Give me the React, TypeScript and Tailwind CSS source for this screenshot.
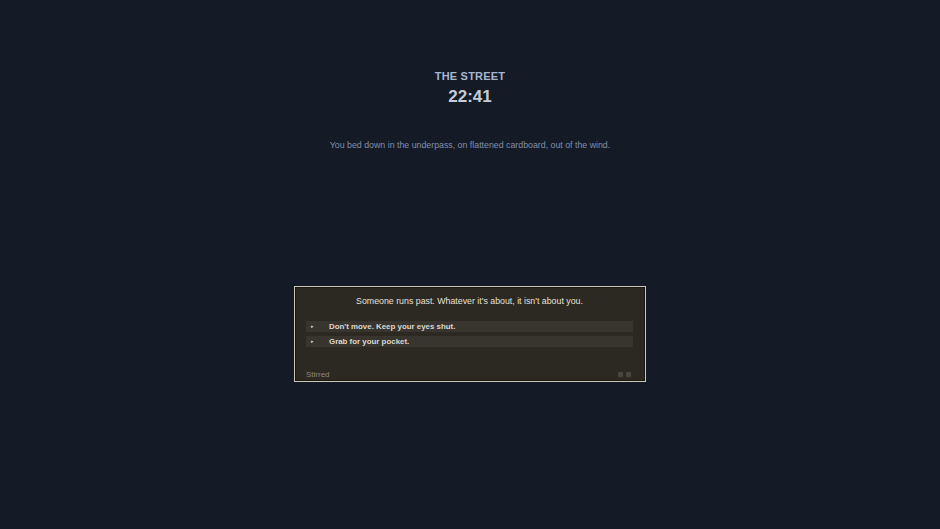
export default function App() {
  const choices = ["Don't move. Keep your eyes shut.", 'Grab for your pocket.'];
  return (
    <div
      className="w-[940px] h-[529px] bg-[#141a26] flex flex-col items-center overflow-hidden"
      style={{ fontFamily: '"Liberation Sans", Arial, sans-serif' }}
    >
      <div className="pt-[69px] text-[11px] leading-[14px] font-bold text-[#a7b6cf] tracking-[0.2px]">THE STREET</div>
      <div className="mt-[4px] text-[17px] leading-[20px] font-bold text-[#c6ccd7]">22:41</div>
      <div className="mt-[32px] text-[8.8px] leading-[12px] text-[#8190ab]">
        You bed down in the underpass, on flattened cardboard, out of the wind.
      </div>
      <div className="mt-[135px] w-[352px] h-[96px] border border-[#cdc7b7] bg-[#2c2822] shadow-[inset_0_0_0_1px_#1a1814] flex flex-col pl-[11px] pr-[12px]">
        <div className="pt-[8px] text-center text-[8.8px] leading-[12px] text-[#e6e1d7]">
          Someone runs past. Whatever it's about, it isn't about you.
        </div>
        <div className="mt-[14px] flex flex-col gap-[4px]">
          {choices.map((c) => (
            <div key={c} className="h-[11px] bg-[#38342e] flex items-center">
              <span className="w-[23px] pl-[5px] text-[5px] leading-[11px] text-[#d8d3c8]">▸</span>
              <span className="text-[7.9px] leading-[11px] font-bold text-[#dcd8ce]">{c}</span>
            </div>
          ))}
        </div>
        <div className="mt-auto pb-[1px] flex items-end justify-between">
          <span className="text-[8px] leading-[11px] text-[#8d8a84]">Stirred</span>
          <div className="flex gap-[3px] mb-[3px] mr-[2px]">
            <div className="w-[5px] h-[5px] bg-[#4a4740]" />
            <div className="w-[5px] h-[5px] bg-[#4a4740]" />
          </div>
        </div>
      </div>
    </div>
  );
}
